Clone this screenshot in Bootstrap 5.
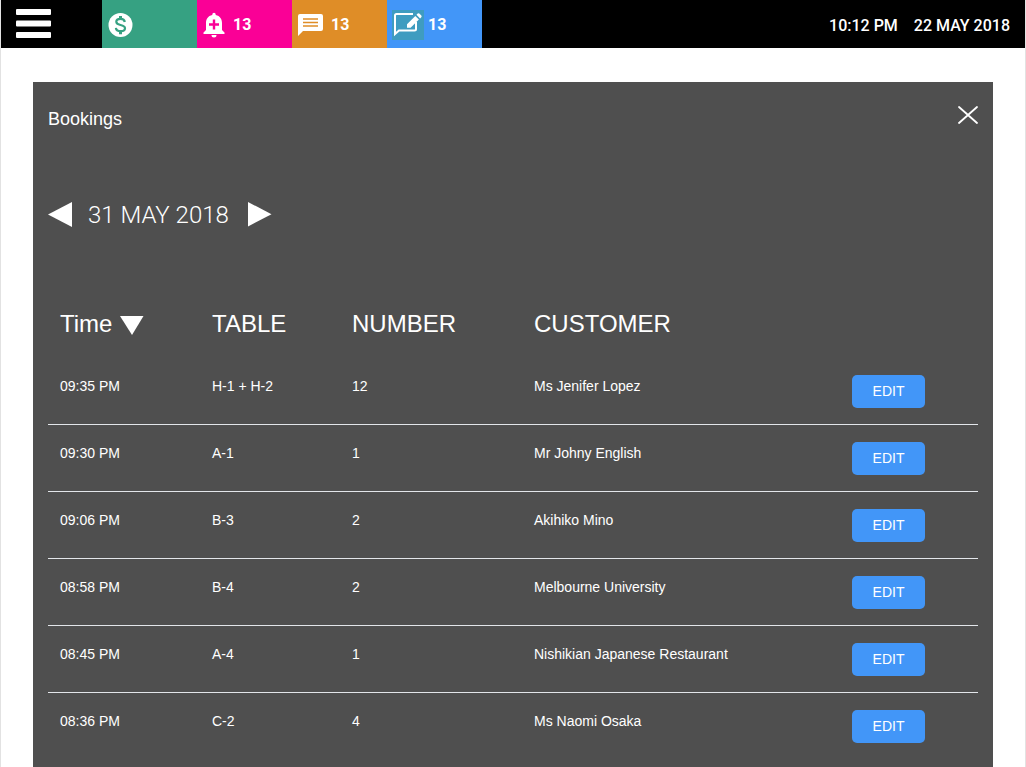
<!DOCTYPE html>
<html lang="en">
<head>
<meta charset="utf-8">
<meta name="viewport" content="width=device-width, initial-scale=1">
<title>Bookings</title>
<link rel="stylesheet" href="https://cdn.jsdelivr.net/npm/bootstrap@5.3.0/dist/css/bootstrap.min.css">
<style>
  body { font-family: "Liberation Sans", Arial, sans-serif; font-size: 14px; line-height: 22px; color: #fff; }
  .page { border: solid #e2e2e2; border-width: 0 1px; }
  .topbar { height: 48px; background: #000; font: 700 16px/24px Roboto, sans-serif; }
  .menu-btn { width: 101px; padding: 0 15px; }
  .tile { width: 95px; height: 48px; padding: 2px 6px 0; gap: 8px; color: #fff; text-decoration: none; }
  .tile-pay { background: #36a182; }
  .tile-alert { background: #fa0096; }
  .tile-chat { background: #df8d27; }
  .tile-book { background: #4296f8; gap: 4px; padding: 2px 5px 0; }
  .clock { gap: 16px; padding: 4px 15px 0 0; font-weight: 500; }
  .stage { padding: 34px 32px 0; }
  .panel { background: #4f4f4f; padding: 24px 15px 0; }
  .panel-title { font-size: 18px; line-height: 26px; }
  .datebar { margin-top: 66px; gap: 16px; }
  .date-text { font: 300 24px/32px Roboto, sans-serif; padding-top: 1px; margin-right: 3px; }
  .bookings { margin: 69px 0 0; table-layout: fixed; color: #fff; --bs-table-bg: transparent; --bs-table-color: #fff; border-color: #e3e6ea; }
  .bookings thead > tr > * { font-size: 24px; line-height: 32px; font-weight: 400; padding: 8px 12px 18px; border: 0; white-space: nowrap; }
  .bookings tbody td { padding: 17px 12px 16px; vertical-align: top; }
  .bookings tr:last-child td { border: 0; }
  .c-time { width: 152px; } .c-table { width: 140px; } .c-number { width: 182px; } .c-customer { width: 318px; }
  .edit-btn { display: block; width: 73px; height: 33px; padding: 0; font-size: 14px; line-height: 33px; color: #fff; background: #4296f8; border: 0; border-radius: 5px; }
  .edit-btn:hover { color: #fff; background: #2f83e5; }
  svg { display: block; flex: none; }
</style>
</head>
<body>
<div class="page min-vh-100 d-flex flex-column">
  <header class="topbar d-flex align-items-center">
    <button class="btn menu-btn border-0 rounded-0" type="button" aria-label="Menu">
      <svg width="36" height="30" fill="#fff" aria-hidden="true"><rect width="35" height="6" y="0" rx="1"/><rect width="35" height="6" y="11.500" rx="1"/><rect width="35" height="6" y="23" rx="1"/></svg>
    </button>
    <nav class="d-flex" aria-label="Shortcuts">
      <a class="tile tile-pay d-flex align-items-center" href="#" aria-label="Payments">
        <svg width="25" height="24" viewBox="0 0 25 24" aria-hidden="true"><circle cx="12.500" cy="12" r="12" fill="#fff"/><path fill="none" stroke="#36a182" stroke-width="2.200" d="M16.800 9c-.3-2.200-2-3.200-4.300-3.200-2.500 0-4.200 1.200-4.200 3 0 1.900 1.500 2.600 4.200 3.200 2.800.6 4.500 1.300 4.500 3.200 0 2-1.800 3-4.400 3-2.700 0-4.500-1.200-4.700-3.400"/><path stroke="#36a182" stroke-width="3" d="M12.500 3v3M12.500 18v3.200"/></svg>
      </a>
      <a class="tile tile-alert d-flex align-items-center" href="#" aria-label="Alerts, 13">
        <svg width="22" height="26" viewBox="0 0 22 26" aria-hidden="true"><path fill="#fff" d="M9.300 3V2.400a1.700 1.700 0 0 1 3.400 0V3c4.400 1 6.300 4 6.300 8v7l2.500 2.500V22H.500v-1.500L3 18v-7c0-4 1.900-7 6.300-8zM8.500 23h5a2.500 2.500 0 0 1-5 0z"/><path stroke="#fa0096" stroke-width="2.400" d="M11 7.500v10M6 12.500h10"/></svg>
        <span>13</span>
      </a>
      <a class="tile tile-chat d-flex align-items-center" href="#" aria-label="Messages, 13">
        <svg width="25" height="22" viewBox="0 0 25 22" aria-hidden="true"><path fill="#fff" d="M2 0h21a2 2 0 0 1 2 2v13a2 2 0 0 1-2 2H5l-5 5V2a2 2 0 0 1 2-2z"/><path stroke="#df8d27" stroke-width="1.700" d="M5 5h15M5 8.500h15M5 12h15"/></svg>
        <span>13</span>
      </a>
      <a class="tile tile-book d-flex align-items-center" href="#" aria-label="Bookings, 13">
        <svg width="32" height="30" viewBox="0 0 32 30" aria-hidden="true"><path fill="#3f9cc0" d="M0 0h32v30H0z"/><path fill="none" stroke="#fff" stroke-width="2" d="M21 4H4.500Q3 4 3 5.500V24l4-3.500h15.500q1.500 0 1.500-1.500v-7"/><path fill="#fff" d="M15 14.200 23.300 6l3.600 3.600-8.300 8.200H15zM24.500 4.800l1.200-1.200q.8-.8 1.600 0l2 2q.8.8 0 1.600l-1.200 1.200z"/></svg>
        <span>13</span>
      </a>
    </nav>
    <div class="clock d-flex ms-auto"><span>10:12 PM</span><span>22 MAY 2018</span></div>
  </header>

  <main class="stage flex-grow-1 d-flex flex-column">
    <section class="panel flex-grow-1">
      <div class="d-flex justify-content-between align-items-start">
        <h1 class="panel-title fw-normal m-0">Bookings</h1>
        <button class="btn p-0 border-0" type="button" aria-label="Close">
          <svg width="20" height="18" viewBox="0 0 20 18" aria-hidden="true"><path stroke="#fff" stroke-width="1.800" stroke-linecap="round" d="M1 1 19 17M19 1 1 17"/></svg>
        </button>
      </div>
      <div class="datebar d-flex align-items-center">
        <button class="btn p-0 border-0" type="button" aria-label="Previous day"><svg width="24" height="25" aria-hidden="true"><path fill="#fff" d="M24 0v25L0 12.500z"/></svg></button>
        <span class="date-text">31 MAY 2018</span>
        <button class="btn p-0 border-0" type="button" aria-label="Next day"><svg width="24" height="25" aria-hidden="true"><path fill="#fff" d="M0 0v24.500l23.500-12.300z"/></svg></button>
      </div>
      <table class="table bookings">
        <colgroup><col class="c-time"><col class="c-table"><col class="c-number"><col class="c-customer"><col></colgroup>
        <thead>
          <tr><th scope="col"><span class="d-flex align-items-center gap-2">Time <svg width="24" height="22" aria-hidden="true"><path fill="#fff" d="M0 3h23.500L12 22z"/></svg></span></th><th scope="col">TABLE</th><th scope="col">NUMBER</th><th scope="col">CUSTOMER</th><td></td></tr>
        </thead>
        <tbody>
          <tr><td>09:35 PM</td><td>H-1 + H-2</td><td>12</td><td>Ms Jenifer Lopez</td><td><button class="btn edit-btn" type="button">EDIT</button></td></tr>
          <tr><td>09:30 PM</td><td>A-1</td><td>1</td><td>Mr Johny English</td><td><button class="btn edit-btn" type="button">EDIT</button></td></tr>
          <tr><td>09:06 PM</td><td>B-3</td><td>2</td><td>Akihiko Mino</td><td><button class="btn edit-btn" type="button">EDIT</button></td></tr>
          <tr><td>08:58 PM</td><td>B-4</td><td>2</td><td>Melbourne University</td><td><button class="btn edit-btn" type="button">EDIT</button></td></tr>
          <tr><td>08:45 PM</td><td>A-4</td><td>1</td><td>Nishikian Japanese Restaurant</td><td><button class="btn edit-btn" type="button">EDIT</button></td></tr>
          <tr><td>08:36 PM</td><td>C-2</td><td>4</td><td>Ms Naomi Osaka</td><td><button class="btn edit-btn" type="button">EDIT</button></td></tr>
        </tbody>
      </table>
    </section>
  </main>
</div>
<script src="https://cdn.jsdelivr.net/npm/bootstrap@5.3.0/dist/js/bootstrap.bundle.min.js"></script>
</body>
</html>
